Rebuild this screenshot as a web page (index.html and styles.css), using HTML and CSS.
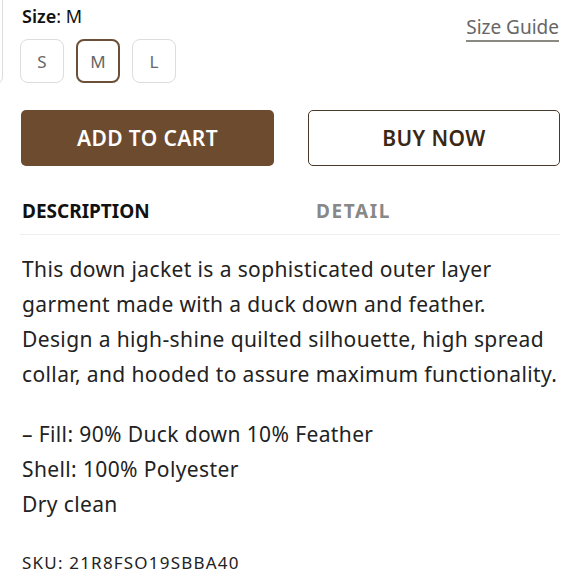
FILE: index.html
```html
<!DOCTYPE html>
<html>
<head>
<meta charset="utf-8">
<link rel="stylesheet" href="styles.css">
</head>
<body>
<div class="page">
  <div class="edge-card"></div>
  <div class="size-row">
    <div class="size-col">
      <div class="size-label"><b>Size</b>: M</div>
      <div class="size-options">
        <span class="size-opt">S</span>
        <span class="size-opt active">M</span>
        <span class="size-opt">L</span>
      </div>
    </div>
    <a class="size-guide">Size Guide</a>
  </div>
  <div class="actions">
    <button class="btn btn-cart">ADD TO CART</button>
    <button class="btn btn-buy">BUY NOW</button>
  </div>
  <div class="tabs">
    <span class="tab active">DESCRIPTION</span>
    <span class="tab detail">DETAIL</span>
  </div>
  <div class="desc">
    <p>This down jacket is a sophisticated outer layer<br>garment made with a duck down and feather.<br>Design a high-shine quilted silhouette, high spread<br>collar, and hooded to assure maximum functionality.</p>
    <p>– Fill: 90% Duck down 10% Feather<br>Shell: 100% Polyester<br>Dry clean</p>
  </div>
  <div class="sku">SKU: 21R8FSO19SBBA40</div>
</div>
</body>
</html>
```
FILE: styles.css
```css
html, body {
  margin: 0;
  padding: 0;
  background: #fff;
}
.page {
  position: relative;
  width: 580px;
  height: 580px;
  overflow: hidden;
  padding: 0 20px 0 20px;
  box-sizing: border-box;
  font-family: "Noto Sans", sans-serif;
  color: #222;
}
.edge-card {
  position: absolute;
  left: -20px;
  top: -20px;
  width: 23px;
  height: 105px;
  border: 1px solid #ddd;
  border-radius: 0 0 8px 0;
  box-sizing: border-box;
}
.size-row {
  display: flex;
  justify-content: space-between;
  align-items: flex-start;
}
.size-label {
  font-size: 18px;
  line-height: 20px;
  padding: 6px 0 0 2px;
  color: #111;
}
.size-label b {
  font-weight: 600;
}
.size-options {
  display: flex;
  gap: 12px;
  margin-top: 13px;
}
.size-opt {
  width: 44px;
  height: 44px;
  box-sizing: border-box;
  border: 1px solid #ddd;
  border-radius: 8px;
  display: flex;
  align-items: center;
  justify-content: center;
  font-size: 17px;
  color: #666;
}
.size-opt.active {
  border: 2px solid #6b5037;
}
.size-guide {
  margin-top: 16px;
  margin-right: 1px;
  font-size: 19px;
  line-height: 22px;
  color: #666;
  border-bottom: 2px solid #8a8a82;
  padding-bottom: 2px;
}
.actions {
  display: flex;
  gap: 34px;
  margin-top: 27px;
  padding-left: 1px;
}
.btn {
  width: 253px;
  height: 56px;
  border-radius: 5px;
  font-family: "Noto Sans", sans-serif;
  font-weight: 600;
  font-size: 21px;
  letter-spacing: 0.4px;
  padding: 0;
}
.btn-cart {
  background: #6d4b2f;
  border: none;
  color: #fff;
}
.btn-buy {
  background: #fff;
  border: 1px solid #4b3a29;
  color: #3a2714;
  width: 252px;
}
.tabs {
  display: flex;
  margin-top: 34px;
  padding: 0 0 12px 2px;
  border-bottom: 1px solid #eeeeee;
}
.tab {
  font-size: 19px;
  font-weight: 700;
  line-height: 22px;
  color: #888;
}
.tab.active {
  color: #111;
  width: 294px;
}
.tab.detail {
  letter-spacing: 1.6px;
}
.desc p {
  margin: 17px 0 0 2px;
  font-size: 21px;
  letter-spacing: 0.38px;
  line-height: 35px;
  color: #222;
}
.desc p + p {
  margin-top: 25px;
}
.sku {
  margin-top: 29px;
  padding-left: 2px;
  font-size: 17px;
  letter-spacing: 1.2px;
  color: #222;
}
```
